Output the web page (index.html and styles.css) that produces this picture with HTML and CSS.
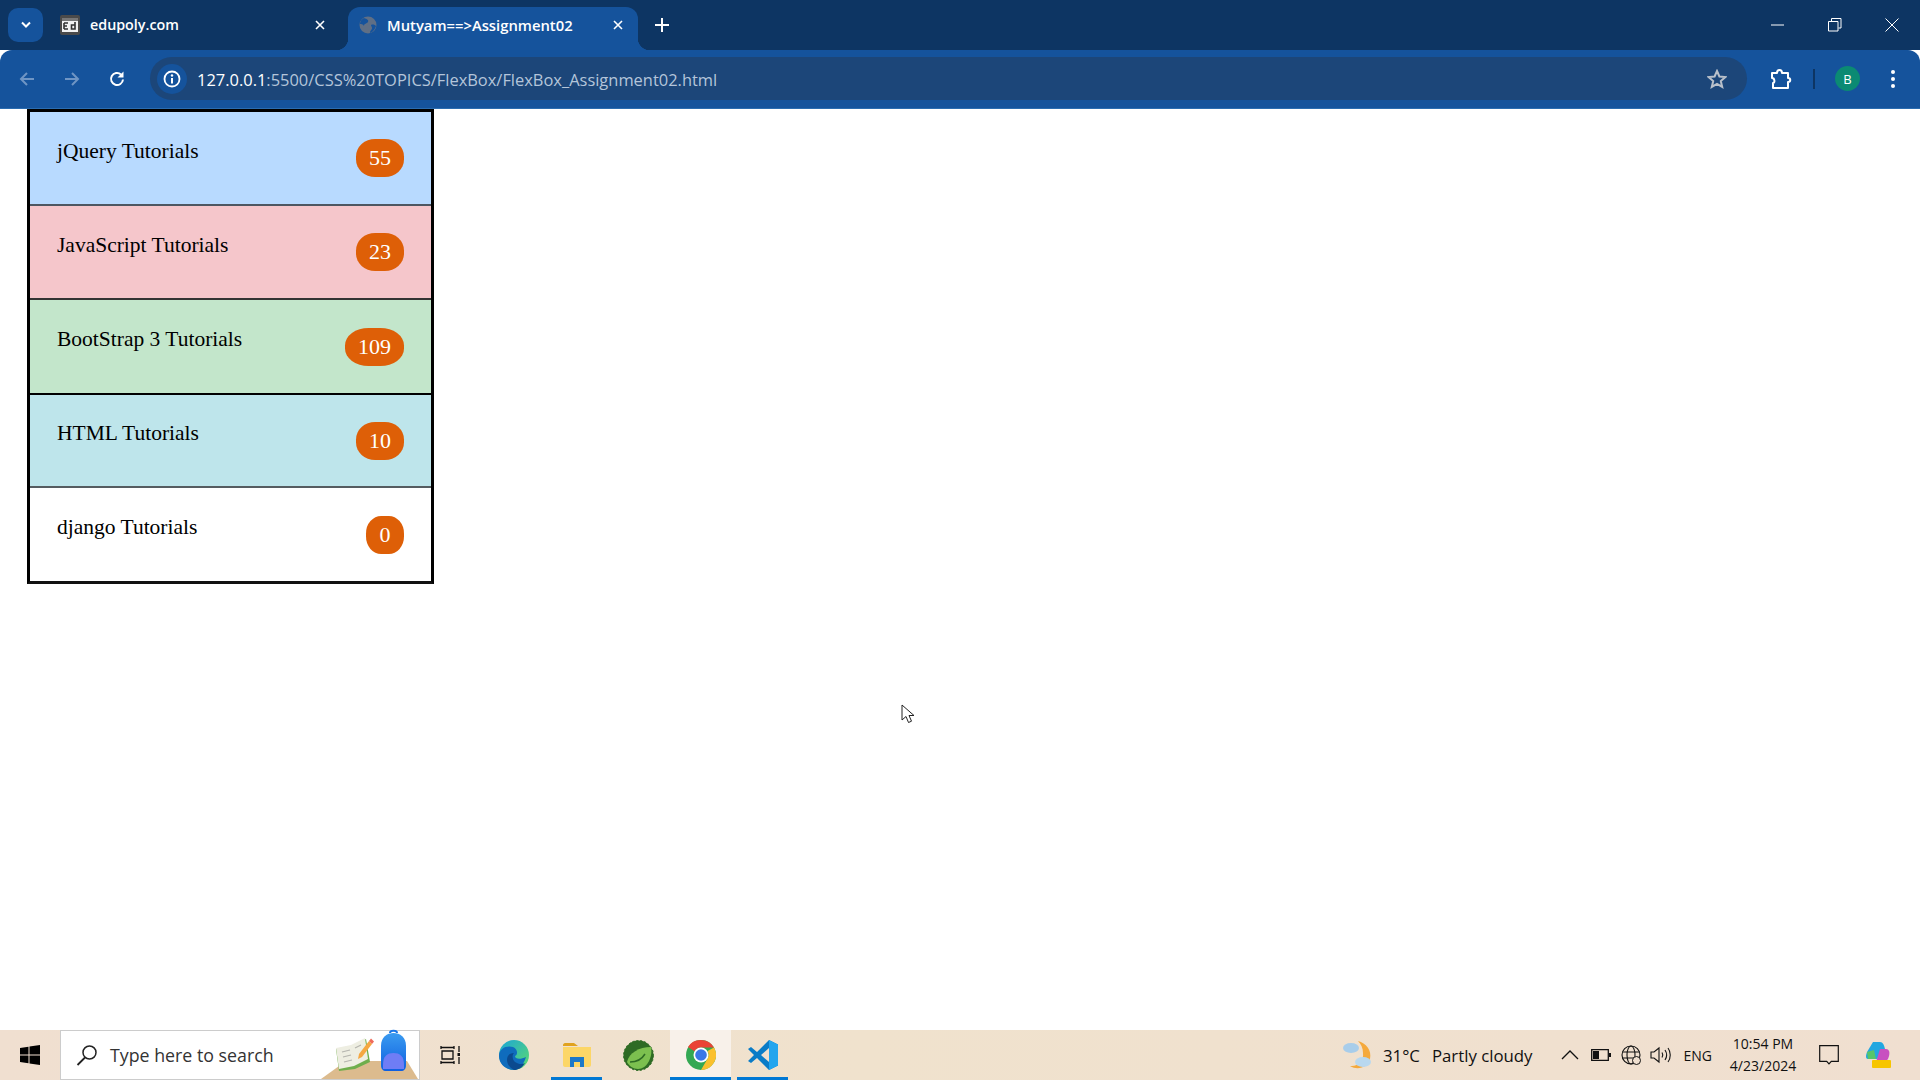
FILE: index.html
```html
<!DOCTYPE html>
<html lang="en">
<head>
    <meta charset="UTF-8">
    <title>Mutyam==>Assignment02</title>
    <link rel="stylesheet" href="styles.css">
</head>
<body>
<div class="screen">
    <div class="tabstrip">
        <div class="tab-search">
            <svg width="12" height="8" viewBox="0 0 12 8"><path d="M2 1.500l4 4 4-4" fill="none" stroke="#fff" stroke-width="2"/></svg>
        </div>
        <div class="tab">
            <svg class="favicon" width="20" height="20" viewBox="0 0 20 20"><rect width="20" height="20" rx="2" fill="#4a4a4a"/><rect x="2" y="3" width="16" height="14" fill="#f2f2f2"/><rect x="2" y="3" width="16" height="3" fill="#777"/><path d="M4 8h4M4 11h3M4 14h4M4 8v6" stroke="#333" stroke-width="1.600" fill="none"/><path d="M15 7v7h-3.500v-4H15" stroke="#333" stroke-width="1.600" fill="none"/></svg>
            <span class="tab-title">edupoly.com</span>
            <svg class="tab-close" width="12" height="12" viewBox="0 0 12 12"><path d="M2 2l8 8M10 2l-8 8" stroke="#fff" stroke-width="1.600"/></svg>
        </div>
        <div class="tab tab-active">
            <svg class="favicon" width="18" height="18" viewBox="0 0 18 18"><circle cx="9" cy="9" r="8.500" fill="#5f6f85"/><path d="M5 2c3 1 5 2 4 4S5 7 5 10c-1-2-3-2-4-2 0-3 2-5 4-6zM12 9c2-1 4 0 5 1-1 3-3 6-6 7 0-3 2-3 2-5 0-1-1-2-1-3z" fill="#15539c"/></svg>
            <span class="tab-title">Mutyam==&gt;Assignment02</span>
            <svg class="tab-close" width="12" height="12" viewBox="0 0 12 12"><path d="M2 2l8 8M10 2l-8 8" stroke="#fff" stroke-width="1.600"/></svg>
        </div>
        <svg class="new-tab" width="14" height="14" viewBox="0 0 14 14"><path d="M7 0v14M0 7h14" stroke="#fff" stroke-width="2"/></svg>
        <div class="window-controls">
            <svg width="14" height="14" viewBox="0 0 14 14"><path d="M0 7h13" stroke="#fff"/></svg>
            <svg width="14" height="14" viewBox="0 0 14 14"><path d="M.5 3.500h9.500v9.500h-9.500zM3.500 3V.5h9.500V10h-2.500" fill="none" stroke="#fff"/></svg>
            <svg width="14" height="14" viewBox="0 0 14 14"><path d="M.5.500l13 13M13.500.500l-13 13" stroke="#fff"/></svg>
        </div>
    </div>

    <div class="toolbar">
        <button class="nav-btn dim">
            <svg width="18" height="18" viewBox="0 0 18 18"><path d="M16 9H3M9 3L3 9l6 6" fill="none" stroke="currentColor" stroke-width="2"/></svg>
        </button>
        <button class="nav-btn dim">
            <svg width="18" height="18" viewBox="0 0 18 18"><path d="M2 9h13M9 3l6 6-6 6" fill="none" stroke="currentColor" stroke-width="2"/></svg>
        </button>
        <button class="nav-btn">
            <svg width="18" height="18" viewBox="0 0 18 18"><path d="M15 9.500A6 6 0 1 1 13 4.500" fill="none" stroke="currentColor" stroke-width="2"/><path d="M15.500 1.500v6h-6z" fill="currentColor"/></svg>
        </button>
        <div class="omnibox">
            <span class="site-info">
                <svg width="18" height="18" viewBox="0 0 18 18"><circle cx="9" cy="9" r="7.500" fill="none" stroke="#fff" stroke-width="1.800"/><path d="M9 8v5.500" stroke="#fff" stroke-width="2"/><circle cx="9" cy="5.500" r="1.200" fill="#fff"/></svg>
            </span>
            <span class="url"><b>127.0.0.1</b>:5500/CSS%20TOPICS/FlexBox/FlexBox_Assignment02.html</span>
            <svg class="star" width="20" height="20" viewBox="0 0 20 20"><path d="M10 2l2.400 5.500 6 .5-4.600 4 1.400 5.900L10 14.800l-5.200 3.100 1.400-5.900-4.600-4 6-.5z" fill="none" stroke="#b9c0ca" stroke-width="2"/></svg>
        </div>
        <svg class="extensions" width="22" height="22" viewBox="0 0 22 22"><path d="M2 5h5c0-4 5-4 5 0h6v5c3 0 3 4 0 4v6H3v-5c2 0 2-5-1-5z" fill="none" stroke="#fff" stroke-width="2" stroke-linejoin="round"/></svg>
        <span class="divider"></span>
        <span class="avatar">B</span>
        <span class="menu-dots"><i></i><i></i><i></i></span>
    </div>

    <div class="page">
        <ul class="tutorials">
            <li class="row row-blue"><span class="name">jQuery Tutorials</span><span class="badge">55</span></li>
            <li class="row row-pink"><span class="name">JavaScript Tutorials</span><span class="badge">23</span></li>
            <li class="row row-green"><span class="name">BootStrap 3 Tutorials</span><span class="badge">109</span></li>
            <li class="row row-cyan"><span class="name">HTML Tutorials</span><span class="badge">10</span></li>
            <li class="row row-white"><span class="name">django Tutorials</span><span class="badge">0</span></li>
        </ul>
        <svg class="cursor" width="15" height="21" viewBox="0 0 15 21"><path d="M1 1v15l4-3.500 2.500 6 3-1.300-2.500-5.700h5z" fill="#fff" stroke="#222" stroke-width="1"/></svg>
    </div>

    <div class="taskbar">
        <div class="start">
            <svg width="20" height="20" viewBox="0 0 20 20"><path d="M0 3l8.500-1.200v7.700H0zM9.500 1.600L20 0v9.500H9.500zM0 10.500h8.500v7.700L0 17zM9.500 10.500H20V20L9.500 18.400z" fill="#000"/></svg>
        </div>
        <div class="search">
            <svg width="22" height="22" viewBox="0 0 22 22"><circle cx="13.500" cy="8.500" r="6.500" fill="none" stroke="#222" stroke-width="1.500"/><path d="M9 13.500L1.500 21" stroke="#222" stroke-width="1.800"/></svg>
            <span class="search-text">Type here to search</span>
            <svg class="search-art" width="100" height="50" viewBox="0 0 100 50">
                <defs><linearGradient id="bag" x1="0" y1="0" x2="0" y2="1"><stop offset="0" stop-color="#3a9bf0"/><stop offset="1" stop-color="#0f5fe0"/></linearGradient></defs>
                <path d="M2 50l25-18h61l11 18z" fill="#dcbb8e"/>
                <path d="M17 20l15-3 15-7 4 23-15 7-16 2z" fill="#6fae4c"/>
                <path d="M17 19l15-3 14-7 3 21-14 7-15 3z" fill="#eeeee2"/>
                <path d="M23 23l8-2M24 28l8-2M25 33l8-2M36 19l6-3" stroke="#b5b5ae" stroke-width="1.200"/>
                <path d="M40 25l10-13 3 3-10 13-4 2z" fill="#f5a742"/>
                <path d="M50 12l2-2.500 3 3-2 2.500z" fill="#ef6a5a"/>
                <path d="M62 36V17c0-9 6-13 12.500-13S87 8 87 17v19c0 4-2 6-5 6H67c-3 0-5-2-5-6z" fill="url(#bag)"/>
                <path d="M64 36c0-9 4-12 10.500-12S85 27 85 36v4H64z" fill="#6f7df5"/>
                <path d="M71 4c0-3 7-3 7 0" fill="none" stroke="#1976e8" stroke-width="2"/>
            </svg>
        </div>
        <div class="task-apps">
            <span class="app app-view">
                <svg width="20" height="20" viewBox="0 0 20 20"><path d="M1 1v3M1 16v3M14 1v3M14 16v3M1 2.500h13M1 17.500h13M2 6h11v8H2z" fill="none" stroke="#111" stroke-width="1.300"/><path d="M19 1v6M19 12v7" stroke="#111" stroke-width="1.300"/><rect x="17.500" y="8" width="3" height="3" fill="#111"/></svg>
            </span>
            <span class="app app-edge">
                <svg width="32" height="32" viewBox="0 0 32 32"><defs><linearGradient id="edge" x1="0" y1="0" x2="1" y2="1"><stop offset="0" stop-color="#1aa5d8"/><stop offset="1" stop-color="#5fdd6b"/></linearGradient></defs><circle cx="16" cy="16" r="15" fill="url(#edge)"/><path d="M1 17c0-8 8-11 14-9 5 2 5 8 2 9 0 3 5 4 11 1-2 7-7 13-12 13C9 31 1 26 1 17z" fill="#0f6cbd"/><path d="M9 21c0-5 3-7 7-7-2 2-2 6 1 9 3 2 7 3 10 1-3 5-7 7-11 7-4-2-7-6-7-10z" fill="#0b4a8f"/></svg>
            </span>
            <span class="app app-folder">
                <svg width="28" height="24" viewBox="0 0 28 24"><path d="M0 2c0-1 1-2 2-2h9l4 3H0z" fill="#e0a21f"/><path d="M0 4h28v18c0 1-1 2-2 2H2c-1 0-2-1-2-2z" fill="#fcd667"/><path d="M7 14h14v10h-4v-5h-6v5H7z" fill="#1c78c8"/></svg>
            </span>
            <span class="app app-spring">
                <svg width="31" height="31" viewBox="0 0 31 31"><circle cx="15.500" cy="15.500" r="15" fill="#2e6b24" stroke="#2e6b24" stroke-width="1" stroke-dasharray="2 2"/><path d="M4 22c2-9 12-15 24-15 2 10-4 22-13 22-5 0-9-3-11-7z" fill="#7cc04f"/><path d="M7 22c6 0 12-3 15-8" stroke="#2e6b24" stroke-width="1.500" fill="none"/></svg>
            </span>
            <span class="app app-chrome">
                <svg width="30" height="30" viewBox="0 0 30 30"><circle cx="15" cy="15" r="15" fill="#34a853"/><path d="M15 0a15 15 0 0 1 13 7.500H15A7.500 7.500 0 0 0 8.500 11.300L2 7A15 15 0 0 1 15 0z" fill="#ea4335"/><path d="M28 7.500A15 15 0 0 1 15 30l6.500-11.300A7.500 7.500 0 0 0 21.500 11z" fill="#fbc02d"/><circle cx="15" cy="15" r="7.500" fill="#fff"/><circle cx="15" cy="15" r="5.800" fill="#3b78e7"/></svg>
            </span>
            <span class="app app-code">
                <svg width="30" height="30" viewBox="0 0 30 30"><path d="M21 0l9 4.500v21L21 30 9 18l-6 5-3-2 6-6-6-6 3-2 6 5z" fill="#0a7cc7"/><path d="M21 0l9 4.500v21L21 30z" fill="#23a5ee"/><path d="M21 8v14l-8-7z" fill="#f0e0cf"/></svg>
            </span>
        </div>
        <div class="tray">
            <svg class="weather" width="32" height="32" viewBox="0 0 32 32"><path d="M16 2c8 2 14 9 12 18-2 8-12 12-20 7 8 1 14-5 13-13 0-5-2-9-5-12z" fill="#f5a93c"/><ellipse cx="9" cy="9" rx="8" ry="5" fill="#a8cdea"/><ellipse cx="21" cy="23" rx="8" ry="5" fill="#b9d8ef"/></svg>
            <span class="temp">31°C</span>
            <span class="forecast">Partly cloudy</span>
            <svg class="tray-icon chevron" width="18" height="10" viewBox="0 0 18 10"><path d="M1 9l8-8 8 8" fill="none" stroke="#111" stroke-width="1.300"/></svg>
            <svg class="tray-icon battery" width="20" height="12" viewBox="0 0 20 12"><path d="M.7.700h16.600v10.600H.7z" fill="none" stroke="#111" stroke-width="1.300"/><rect x="2" y="2" width="6" height="8" fill="#111"/><rect x="18" y="4" width="2" height="4" fill="#111"/></svg>
            <svg class="tray-icon globe" width="20" height="20" viewBox="0 0 20 20"><g fill="none" stroke="#111" stroke-width="1.100"><circle cx="10" cy="10" r="9"/><ellipse cx="10" cy="10" rx="4" ry="9"/><path d="M1.500 7h17M1.500 13h17"/></g><circle cx="15.500" cy="15.500" r="4" fill="#efdfcf" stroke="#111"/></svg>
            <svg class="tray-icon speaker" width="22" height="18" viewBox="0 0 22 18"><g fill="none" stroke="#111" stroke-width="1.100"><path d="M1 6h3l5-4v14l-5-4H1z"/><path d="M12 6.500c1 1.500 1 3.500 0 5M15 4c2 3 2 7 0 10M18 2c3 4 3 10 0 14"/></g></svg>
            <span class="lang">ENG</span>
            <span class="clock"><span>10:54 PM</span><span>4/23/2024</span></span>
            <svg class="tray-icon notify" width="20" height="20" viewBox="0 0 20 20"><path d="M.7.700h18.600v15.600h-7l-2.300 2.500-2.300-2.500H.7z" fill="none" stroke="#111" stroke-width="1.200"/></svg>
            <svg class="tray-icon copilot" width="26" height="28" viewBox="0 0 26 28"><path d="M8 1h7c3 0 4 3 5 7l-8 10H3C0 18 1 14 2 11z" fill="#22a7e0"/><path d="M15 8h6c3 0 4 3 3 7-1 4-3 6-6 6h-7z" fill="#c850c0"/><path d="M2 11l7-2 2 9H3z" fill="#57c66a"/><rect x="7" y="19" width="19" height="8" rx="1" fill="#f7c500"/></svg>
        </div>
    </div>
</div>
</body>
</html>
```

FILE: styles.css
```css
* { box-sizing: border-box; }
html, body { margin: 0; height: 100%; }
body { font-family: "Liberation Serif", serif; background: #fff; }
.screen { width: 1920px; height: 1080px; display: flex; flex-direction: column; overflow: hidden; }

/* browser tabs */
.tabstrip { height: 50px; background: #0d3563; display: flex; align-items: flex-end; padding-left: 8px; color: #fff; font-family: "Open Sans", sans-serif; font-size: 14.300px; font-weight: 600; }
.tab-search { width: 35px; height: 34px; margin-bottom: 8px; background: #15539c; border-radius: 10px; display: flex; align-items: center; justify-content: center; }
.tab { width: 307px; height: 43px; padding: 0 18px 8px 17px; display: flex; align-items: center; }
.tab-active { position: relative; width: 290px; margin-left: -2px; padding: 0 8px 8px 11px; background: #15539c; border-radius: 12px 12px 0 0; font-size: 14.800px; }
.tab-active::before, .tab-active::after { content: ""; position: absolute; bottom: 0; width: 12px; height: 12px; }
.tab-active::before { left: -12px; background: radial-gradient(circle at 0 0, transparent 12px, #15539c 12.500px); }
.tab-active::after { right: -12px; background: radial-gradient(circle at 100% 0, transparent 12px, #15539c 12.500px); }
.favicon { flex: none; }
.tab-title { margin-left: 10px; flex: 1; white-space: nowrap; }
.tab-close { flex: none; margin-right: 6px; }
.new-tab { margin: 0 0 18px 17px; }
.window-controls { margin-left: auto; margin-bottom: 18px; padding-right: 21px; display: flex; gap: 43px; }

/* address bar */
.toolbar { height: 59px; background: #15539c; border-bottom: 1px solid #2a6cb0; border-radius: 12px 12px 0 0; display: flex; align-items: center; padding: 0 21px 1px 5px; color: #fff; }
.nav-btn { width: 44px; height: 36px; margin-right: 1px; background: none; border: none; padding: 0; color: #fff; display: flex; align-items: center; justify-content: center; }
.nav-btn.dim { color: #6f95c4; }
.omnibox { width: 1597px; height: 43px; margin-left: 10px; background: #1c4679; border-radius: 22px; display: flex; align-items: center; padding: 0 20px 0 7px; }
.site-info { width: 30px; height: 30px; border-radius: 50%; background: #15539c; display: flex; align-items: center; justify-content: center; }
.url { margin-left: 10px; padding-top: 2px; flex: 1; font-family: "Open Sans", sans-serif; font-size: 16.450px; color: #b4c5da; white-space: nowrap; }
.url b { font-weight: 400; color: #fff; }
.extensions { margin-left: 23px; }
.divider { width: 2px; height: 20px; margin-left: 21px; background: #0d3563; }
.avatar { width: 25px; height: 25px; margin-left: 20px; border-radius: 50%; background: #0b8a73; color: #fff; font: 13px "Open Sans", sans-serif; display: flex; align-items: center; justify-content: center; }
.menu-dots { margin-left: 31px; display: flex; flex-direction: column; gap: 3px; }
.menu-dots i { width: 4px; height: 4px; border-radius: 50%; background: #fff; }

/* the page itself */
.page { flex: 1; position: relative; padding-left: 27px; }
.tutorials { width: 407px; margin: 0; padding: 0; list-style: none; border: 3px solid #000; border-bottom-color: #111; }
.row { height: 94px; display: flex; align-items: center; justify-content: space-between; padding: 0 27px; border-bottom: 2px solid #333; }
.row-blue { background: #b8daff; border-bottom-color: #4d5661; }
.row-pink { background: #f5c6cb; }
.row-green { height: 95px; background: #c3e6cb; border-bottom-color: #000; }
.row-cyan { height: 93px; background: #bee5eb; border-bottom-color: #555c60; }
.row-white { height: 93px; background: #fff; border-bottom: none; }
.name { font-size: 21.500px; margin-bottom: 14px; white-space: nowrap; }
.badge { min-width: 38px; height: 38px; padding: 0 13px; border-radius: 40% / 46%; background: #de5f07; color: #fff; font-size: 22px; display: flex; align-items: center; justify-content: center; }
.cursor { position: absolute; left: 901px; top: 595px; }

/* windows taskbar */
.taskbar { height: 50px; background: linear-gradient(90deg, #f0dfd0, #f0e2cd 45%, #f0dfd0); display: flex; align-items: stretch; }
.start { width: 60px; display: flex; align-items: center; justify-content: center; }
.search { width: 360px; background: #fff; border: 1px solid #ccc; display: flex; align-items: center; padding-left: 15px; position: relative; }
.search-text { margin-left: 12px; font-family: "Open Sans", sans-serif; font-size: 17.800px; color: #333; }
.search-art { position: absolute; right: 0; bottom: 0; }
.task-apps { display: flex; }
.app { height: 50px; padding-top: 3px; display: flex; align-items: center; justify-content: center; border-bottom: 3px solid transparent; }
.app-view { width: 60px; }
.app-edge { width: 68px; }
.app-folder { width: 51px; margin: 0 5px 0 3px; border-bottom-color: #0078d4; }
.app-spring { width: 63px; }
.app-chrome { width: 61px; background: #f8f1ea; border-bottom-color: #0078d4; }
.app-code { width: 51px; margin-left: 6px; border-bottom-color: #0078d4; }
.tray { margin-left: auto; display: flex; align-items: center; padding-right: 29px; font-family: "Open Sans", sans-serif; font-size: 16.800px; color: #111; }
.temp { margin-left: 9px; }
.forecast { margin-left: 12px; }
.chevron { margin-left: 28px; }
.battery { margin-left: 12px; }
.globe { margin-left: 10px; }
.speaker { margin-left: 9px; }
.lang { margin-left: 12px; font-size: 14px; }
.clock { width: 90px; margin-left: 6px; font-size: 14px; line-height: 22px; display: flex; flex-direction: column; align-items: center; }
.notify { margin-left: 11px; }
.copilot { margin-left: 26px; }
```
